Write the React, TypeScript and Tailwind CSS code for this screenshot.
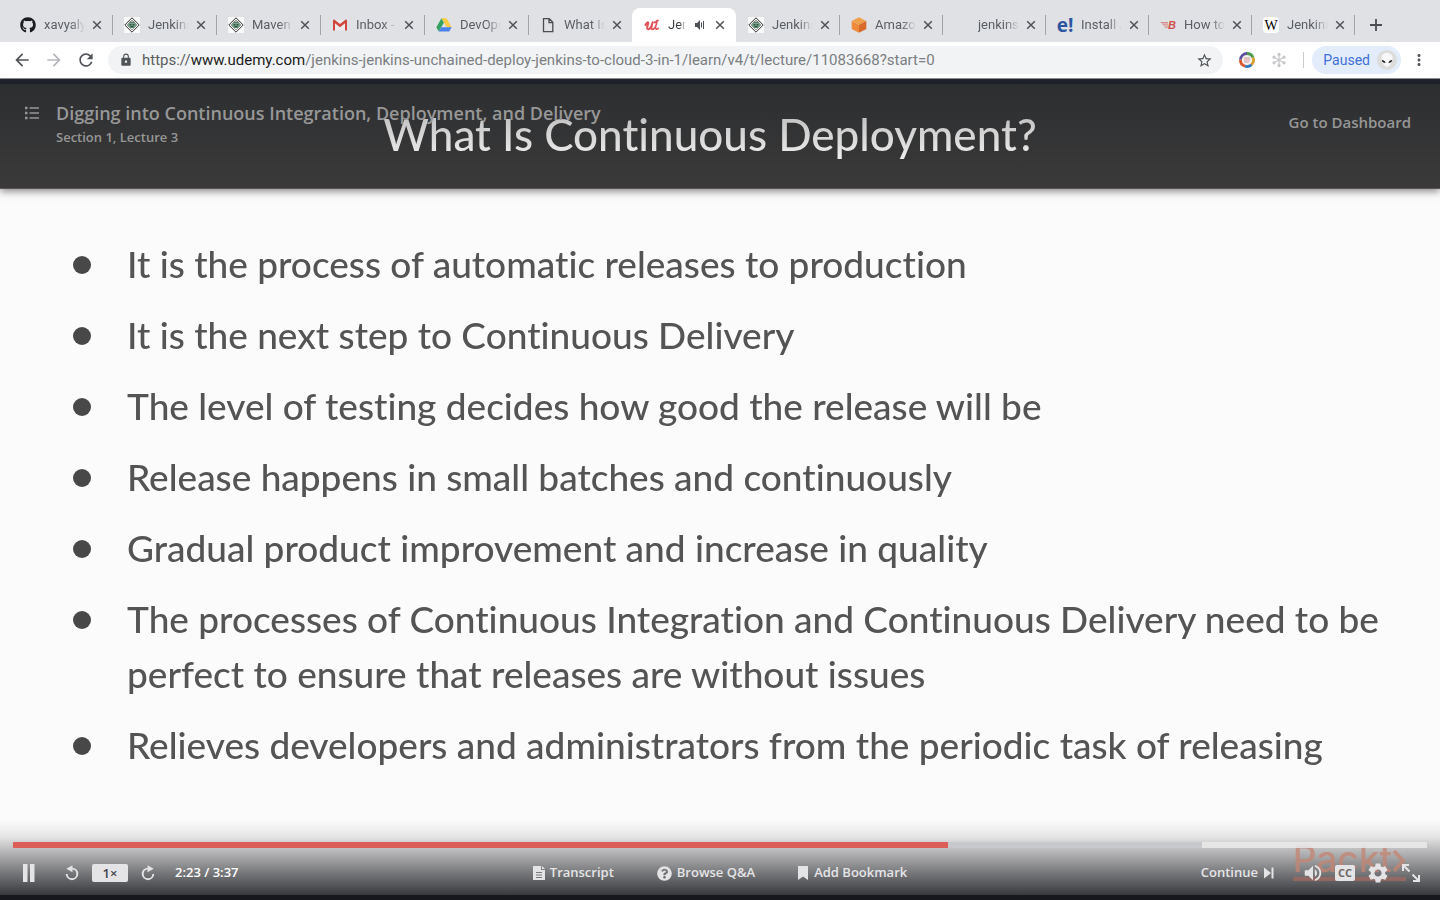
import React from "react";
import { FaGithub, FaQuestionCircle } from "react-icons/fa";
import {
  MdVolumeUp,
  MdSettings,
  MdRefresh,
  MdStarBorder,
  MdArrowBack,
  MdArrowForward,
  MdLock,
  MdMoreVert,
} from "react-icons/md";

function JenkinsIcon() {
  return (
    <svg viewBox="0 0 16 16" className="size-4" aria-hidden="true">
      <rect width="16" height="16" fill="#fafafa" />
      <path d="M8 .8 15.2 8 8 15.2.8 8z" fill="#fff" stroke="#333" strokeWidth="1" />
      <path d="M8 2.9 13.1 8 8 13.1 2.9 8z" fill="#dfe8e2" stroke="#555" strokeWidth=".6" />
      <path d="M4.2 6.2h7.6v2.3L9.6 11H6.4L4.2 8.500z" fill="#5f9273" />
      <path d="M5.500 5.200h5M6 7.600h1.200M8.900 7.600h1.200M6.700 9.600h2.600" stroke="#26352c" strokeWidth=".9" />
    </svg>
  );
}

function GmailIcon() {
  return (
    <svg viewBox="0 0 16 16" className="size-4" aria-hidden="true">
      <path d="M2 3h12v10.500H2z" fill="#eceaea" />
      <path d="M1 3.300v10.200h2V6.300l5 4 5-4v7.200h2V3.300C15 2.600 14 2.300 13.400 2.800L8 7.100 2.600 2.800C2 2.300 1 2.600 1 3.300z" fill="#d0483c" />
    </svg>
  );
}

function DriveIcon() {
  return (
    <svg viewBox="0 0 16 16" className="size-4" aria-hidden="true">
      <path d="M5.500 1.300 8 5.600 2.800 14.600.3 10.300z" fill="#35a261" />
      <path d="M5.500 1.300h5l5.200 9h-5z" fill="#fccb44" />
      <path d="M5.300 10.300h10.400l-2.500 4.300H2.800z" fill="#4a82ea" />
    </svg>
  );
}

function PageIcon() {
  return (
    <svg viewBox="0 0 16 16" className="size-4" aria-hidden="true">
      <path d="M3.500 1.700h5.800l3.500 3.600v9.300H3.500zM9 1.900v3.700h3.600" fill="none" stroke="#4b4d51" strokeWidth="1.300" />
    </svg>
  );
}

function UdemyIcon() {
  return (
    <svg viewBox="0 0 16 16" className="size-4" aria-hidden="true">
      <path d="M1.500 8C2.500 5.800 3.800 5 4.300 5.600 4.900 6.500 2.700 9.500 3.200 11.300 3.700 13.200 6.300 12 7.300 9.300L8.700 5.300" fill="none" stroke="#e0555a" strokeWidth="2" strokeLinecap="round" />
      <path d="M7.800 8.500C7.200 11 7.500 12.600 8.900 12.300 10.500 12 11.500 10 12.300 7.500L13 3.500M10.500 5.500l3.500-2M11.600 9.500C11.200 12 12.500 12.900 14.300 11.300" fill="none" stroke="#e0555a" strokeWidth="1.700" strokeLinecap="round" />
    </svg>
  );
}

function CubeIcon() {
  return (
    <svg viewBox="0 0 16 16" className="size-4" aria-hidden="true">
      <path d="M8 .3 15.300 4 8 7.700.7 4z" fill="#f0a04b" />
      <path d="M.7 4 8 7.700v8L.7 12z" fill="#ee8a3a" />
      <path d="M15.300 4 8 7.700v8l7.300-3.700z" fill="#d86a2b" />
    </svg>
  );
}

function BurnIcon() {
  return (
    <span className="flex w-4 items-center" aria-hidden="true">
      <svg viewBox="0 0 8 8" className="size-2">
        <path d="M0 1h8v1.500H2zM2 3.300h6v1.300H3.500zM4 5.400h4v1.300H5z" fill="#d98a88" />
      </svg>
      <span className="font-['Liberation_Sans'] text-[11px] leading-4 font-bold text-[#cf4f4a] italic">B</span>
    </span>
  );
}

function RewindIcon() {
  return (
    <svg viewBox="0 0 16 16" className="size-4" aria-hidden="true">
      <path d="M8.200 3.600A5.300 5.300 0 1 1 2.700 9" fill="none" stroke="currentColor" strokeWidth="1.900" />
      <path d="M2.300 3.700 8.500.2v7z" fill="currentColor" />
    </svg>
  );
}

type Tab = { title: string; icon: React.ReactNode; wide?: boolean; active?: boolean };

const tabs: Tab[] = [
  { title: "xavyalya", icon: <FaGithub className="size-4 text-[#1b1c1e]" />, wide: true },
  { title: "Jenkins", icon: <JenkinsIcon />, wide: true },
  { title: "Maven P", icon: <JenkinsIcon />, wide: true },
  { title: "Inbox -", icon: <GmailIcon />, wide: true },
  { title: "DevOps", icon: <DriveIcon />, wide: true },
  { title: "What Is", icon: <PageIcon />, wide: true },
  { title: "Jenk", icon: <UdemyIcon />, wide: true, active: true },
  { title: "Jenkins", icon: <JenkinsIcon /> },
  { title: "Amazon", icon: <CubeIcon /> },
  { title: "jenkins-", icon: null },
  { title: "Install J", icon: <span className="font-['Open_Sans'] text-[19px] leading-4 font-bold text-[#2c56a0]">e!</span> },
  { title: "How to", icon: <BurnIcon /> },
  {
    title: "Jenkins",
    icon: <span className="flex size-4 items-center justify-center rounded-sm bg-white font-['Liberation_Serif'] text-[14px] text-black">W</span>,
  },
];

function TabItem({ tab, beforeActive }: { tab: Tab; beforeActive: boolean }) {
  return (
    <div
      className={[
        "relative flex h-[34px] items-center pl-3",
        tab.wide ? "w-[104px]" : "w-[103px]",
        tab.active ? "rounded-t-lg bg-white text-[#3c4043]" : "text-[#5b5e63]",
      ].join(" ")}
    >
      <span className="flex w-4 shrink-0 justify-center">{tab.icon}</span>
      <span
        className={[
          "ml-2 overflow-hidden text-[13px] leading-5 whitespace-nowrap [mask-image:linear-gradient(to_right,black_65%,transparent)]",
          tab.active ? "w-[18px]" : "w-[41px]",
        ].join(" ")}
      >
        {tab.title}
      </span>
      {tab.active && (
        <svg viewBox="0 0 12 12" className="ml-2 size-3" aria-hidden="true">
          <path d="M1 4h2l3-3v10L3 8H1z" fill="#4d5054" />
          <path d="M7.500 3.500v5M9.500 2v8" stroke="#4d5054" strokeWidth="1" />
        </svg>
      )}
      <button aria-label={`Close ${tab.title}`} className={tab.active ? "ml-[9px]" : "ml-[7px]"}>
        <svg viewBox="0 0 10 10" className="size-[10px]" aria-hidden="true">
          <path d="m1.200 1.200 7.600 7.600M8.800 1.200 1.200 8.800" stroke="#4f5256" strokeWidth="1.500" />
        </svg>
      </button>
      {!tab.active && !beforeActive && <span className="absolute top-[7px] -right-px h-5 w-px bg-[#a0a3a8]" />}
    </div>
  );
}

function Browser() {
  return (
    <header className="shrink-0 font-[Roboto,sans-serif]">
      <div className="flex h-[42px] items-end bg-[#dfe1e5] pl-2">
        {tabs.map((t, i) => (
          <TabItem key={i} tab={t} beforeActive={Boolean(tabs[i + 1]?.active)} />
        ))}
        <button aria-label="New tab" className="ml-4 flex h-[34px] items-center">
          <svg viewBox="0 0 12 12" className="size-3" aria-hidden="true">
            <path d="M6 0v12M0 6h12" stroke="#4b4e52" strokeWidth="1.800" />
          </svg>
        </button>
      </div>
      <div className="flex h-[37px] items-center border-b border-[#8f9094] bg-white pl-3 text-[#505357]">
        <button aria-label="Back"><MdArrowBack className="size-5" /></button>
        <button aria-label="Forward" className="ml-3 text-[#b5b7ba]"><MdArrowForward className="size-5" /></button>
        <button aria-label="Reload" className="ml-3"><MdRefresh className="size-5" /></button>
        <div className="ml-3 flex h-7 flex-1 items-center rounded-full bg-[#f1f3f4] pr-[10px] pl-[11px]">
          <MdLock className="size-[14px]" />
          <p className="ml-[9px] flex-1 text-[15px] whitespace-nowrap text-[#7b7e83]">
            <span className="text-[#5a5d61]">https://</span>
            <span className="text-[#1c1d20]">www.udemy.com</span>
            /jenkins-jenkins-unchained-deploy-jenkins-to-cloud-3-in-1/learn/v4/t/lecture/11083668?start=0
          </p>
          <button aria-label="Bookmark this page"><MdStarBorder className="size-[17px]" /></button>
        </div>
        <svg viewBox="0 0 16 16" className="ml-4 size-4" aria-hidden="true">
          <circle cx="8" cy="8" r="6" fill="#f6efef" />
          <g fill="none" strokeWidth="2.800">
            <path d="M8 1.500A6.500 6.500 0 0 1 14 5.500" stroke="#4c9a50" />
            <path d="M14 5.500A6.500 6.500 0 0 1 12.500 12.700" stroke="#d9a030" />
            <path d="M12.500 12.700A6.500 6.500 0 0 1 6 14.200" stroke="#2f76bb" />
            <path d="M6 14.200A6.500 6.500 0 0 1 1.500 7.500" stroke="#d9562a" />
            <path d="M1.500 7.500A6.500 6.500 0 0 1 8 1.500" stroke="#5f509c" />
          </g>
          <path d="M5 6h6M5 8h6M5 10h5" stroke="#c99896" strokeWidth="1" />
        </svg>
        <svg viewBox="0 0 16 16" className="ml-4 size-4" aria-hidden="true">
          <g stroke="#c6c7c9" strokeWidth="1.300" fill="#c6c7c9">
            <path d="M8 2v12M2.800 5l10.400 6M13.200 5 2.800 11" />
            <circle cx="8" cy="2.500" r="1" /><circle cx="8" cy="13.500" r="1" />
            <circle cx="3" cy="5.200" r="1" /><circle cx="13" cy="5.200" r="1" />
            <circle cx="3" cy="10.800" r="1" /><circle cx="13" cy="10.800" r="1" />
          </g>
        </svg>
        <span className="ml-4 h-4 w-px bg-[#c9cbce]" />
        <button className="ml-2 flex h-7 items-center rounded-full bg-[#e3ecfb] pr-1 pl-[11px] text-[14px] text-[#3f6fd8]">
          Paused
          <svg viewBox="0 0 20 20" className="ml-[7px] size-5" aria-hidden="true">
            <circle cx="10" cy="10" r="10" fill="#dcdcda" />
            <path d="M10 3c4 0 6 2.500 5.500 6-.5 4-3.500 8-5.500 8s-5-4-5.500-8C4 5.500 6 3 10 3z" fill="#f7f7f7" />
            <path d="M4.800 10c1.700 0 3.400 1 3.800 3-2 0-3.800-1-3.800-3zM15.200 10c-1.700 0-3.400 1-3.800 3 2 0 3.800-1 3.800-3z" fill="#1b1b1b" />
          </svg>
        </button>
        <button aria-label="Menu" className="mr-3 ml-[9px]"><MdMoreVert className="size-[18px]" /></button>
      </div>
    </header>
  );
}

const bullets = [
  "It is the process of automatic releases to production",
  "It is the next step to Continuous Delivery",
  "The level of testing decides how good the release will be",
  "Release happens in small batches and continuously",
  "Gradual product improvement and increase in quality",
  "The processes of Continuous Integration and Continuous Delivery need to be perfect to ensure that releases are without issues",
  "Relieves developers and administrators from the periodic task of releasing",
];

function Slide() {
  return (
    <section className="flex flex-1 flex-col bg-[#fbfbfb] font-[Lato,sans-serif] font-medium [font-variant-ligatures:none]">
      <div className="flex h-[105px] shrink-0 items-center justify-center border-b border-[#5c5454] bg-linear-to-b from-[#2d2e30] to-[#3a3a3a] shadow-[0_2px_8px_rgba(0,0,0,0.5)]">
        <h1 className="mr-5 mb-1 bg-linear-to-b from-[#b8b8b8] to-[#f2f2f2] bg-clip-text text-[44px] leading-[56px] text-transparent blur-[0.5px]">
          What Is Continuous Deployment?
        </h1>
      </div>
      <ul className="flex flex-1 flex-col gap-4 pt-[47px] pr-8 pl-[73px] text-[37px] leading-[55px] text-[#545454] blur-[0.5px]">
        {bullets.map((b) => (
          <li key={b} className="flex">
            <span className="mt-5 mr-9 size-[18px] shrink-0 rounded-full bg-[#484848]" />
            <span>{b}</span>
          </li>
        ))}
      </ul>
    </section>
  );
}

function Controls() {
  return (
    <div className="absolute inset-x-0 bottom-0 h-[75px] bg-[linear-gradient(to_bottom,rgba(40,41,45,0)_0%,rgba(40,41,45,0.1)_22%,rgba(40,41,45,0.24)_34%,rgba(40,41,45,0.6)_68%,rgba(40,41,45,0.92)_100%)] px-[13px] font-['Open_Sans',sans-serif] text-[13px] font-semibold text-[#e4e4e6]">
      <div className="pointer-events-none absolute top-[21px] right-[34px] flex border-b-4 border-[#a06a60] text-[#c48472] opacity-75 blur-[0.5px]" aria-hidden="true">
        <span className="font-[Inter,sans-serif] text-[37px] leading-[36px] font-medium">Packt</span>
        <svg viewBox="0 0 14 28" className="mt-[6px] h-7 w-[14px]">
          <path d="m2 4 9 10-9 10" fill="none" stroke="currentColor" strokeWidth="4" />
        </svg>
      </div>
      <div className="relative flex h-full flex-col pt-[22px]">
        <div role="progressbar" aria-label="Playback position" aria-valuenow={66} className="flex h-[6px] shrink-0 bg-[#e8e8e9]/90">
          <span className="w-[66.1%] bg-[#dc5e58]" />
          <span className="w-[18%] bg-[#c8c9cd]" />
        </div>
        <div className="mt-[13px] grid h-6 grid-cols-[1fr_auto_1fr] items-center">
          <div className="flex items-center pl-[10px]">
            <button aria-label="Pause">
              <svg viewBox="0 0 12 18" className="h-[18px] w-3" aria-hidden="true">
                <path d="M0 0h4.500v18H0zM7 0h4.500v18H7z" fill="currentColor" />
              </svg>
            </button>
            <button aria-label="Rewind" className="ml-[29px]"><RewindIcon /></button>
            <button className="ml-3 h-[18px] w-9 rounded-xs bg-[#e4e4e6] leading-[18px] text-[#3f414c]">1×</button>
            <button aria-label="Forward" className="ml-3 -scale-x-100"><RewindIcon /></button>
            <span className="ml-[19px] text-white">2:23 / 3:37</span>
          </div>
          <div className="flex items-center gap-[43px]">
            <button className="flex items-center gap-[5px]">
              <svg viewBox="0 0 12 14" className="h-[14px] w-3" aria-hidden="true">
                <path d="M0 0h8v4h4v10H0z" fill="currentColor" />
                <path d="m9 0 3 3H9z" fill="currentColor" />
                <path d="M3 6.500h6M3 9h6M3 11.500h6" stroke="#77787a" strokeWidth="1" />
              </svg>
              Transcript
            </button>
            <button className="flex items-center gap-[5px]"><FaQuestionCircle className="size-[15px]" />Browse Q&amp;A</button>
            <button className="flex items-center gap-[6px]">
              <svg viewBox="0 0 10 14" className="h-[14px] w-[10px]" aria-hidden="true"><path d="M0 0h10v14L5 10.500 0 14z" fill="currentColor" /></svg>
              Add Bookmark
            </button>
          </div>
          <div className="flex items-center justify-end pr-[7px]">
            <button className="flex items-center gap-[6px]">
              Continue
              <svg viewBox="0 0 10 12" className="h-3 w-[10px]" aria-hidden="true"><path d="M0 .5 7 6 0 11.500zM7.500.5H9.500v11H7.500z" fill="currentColor" /></svg>
            </button>
            <button aria-label="Volume" className="ml-7"><MdVolumeUp className="size-[22px]" /></button>
            <button aria-label="Captions" className="ml-[11px] h-4 w-5 rounded-xs bg-[#e4e4e6] text-[11px] leading-4 font-bold text-[#6d6563]">CC</button>
            <button aria-label="Settings" className="ml-[11px]"><MdSettings className="size-6" /></button>
            <button aria-label="Full screen" className="ml-3">
              <svg viewBox="0 0 18 18" className="size-[18px]" aria-hidden="true">
                <path d="M1 7V1h6M1.500 1.500 7.500 7.500M17 11v6h-6M16.500 16.500l-6-6" fill="none" stroke="currentColor" strokeWidth="2" />
              </svg>
            </button>
          </div>
        </div>
      </div>
    </div>
  );
}

export default function App() {
  return (
    <div className="flex min-h-screen flex-col bg-[#17181d]">
      <Browser />
      <main className="relative flex flex-1 flex-col border-t-[5px] border-b-[5px] border-t-[#22252e] border-b-[#17181d]">
        <Slide />
        <div className="absolute inset-x-0 top-[17px] flex items-start pr-[29px] pl-6 font-['Open_Sans',sans-serif] font-semibold text-[#979797]">
          <button aria-label="Course content" className="mt-[5px]">
            <svg viewBox="0 0 16 14" className="h-[14px] w-4" aria-hidden="true">
              <path d="M5.500 2H15M5.500 7H15M5.500 12H15" stroke="currentColor" strokeWidth="1.300" />
              <path d="M1 2h2.500M1 7h2.500M1 12h2.500" stroke="currentColor" strokeWidth="2.400" />
            </svg>
          </button>
          <div className="ml-4 flex-1">
            <h2 className="text-[18px] leading-6">Digging into Continuous Integration, Deployment, and Delivery</h2>
            <p className="mt-[2px] text-[13px] leading-5">Section 1, Lecture 3</p>
          </div>
          <a href="#dashboard" className="mt-[9px] text-[15px] leading-6">Go to Dashboard</a>
        </div>
        <Controls />
      </main>
    </div>
  );
}
